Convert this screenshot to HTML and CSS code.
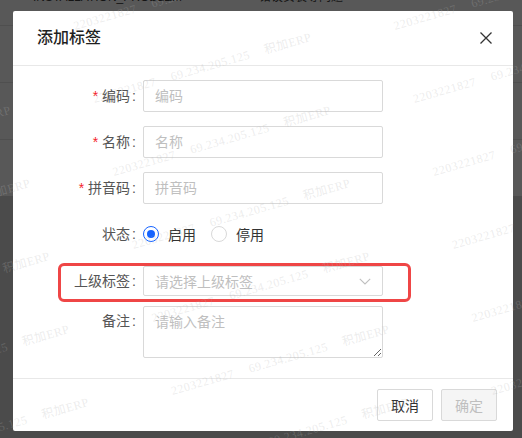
FILE: index.html
```html
<!DOCTYPE html>
<html lang="zh-CN">
<head>
    <meta charset="UTF-8">
    <meta name="viewport" content="width=device-width, initial-scale=1.0">
    <title>添加标签</title>
    <link rel="stylesheet" href="styles.css">
</head>
<body>

    <!-- table behind the mask -->
    <div class="bg-table">
        <div class="bg-row bg-row-first">
            <span class="bg-cell bg-code">INSTALLATION_PROBLEM</span>
            <span class="bg-cell bg-name">错误安装等问题</span>
        </div>
        <div class="bg-row"></div>
        <div class="bg-row"></div>
        <div class="bg-row bg-row-last"></div>
    </div>

    <div class="modal">
        <div class="modal-header">
            <div class="modal-title">添加标签</div>
            <button class="modal-close" type="button">
                <svg width="14" height="14" viewBox="0 0 14 14">
                    <path d="M1.5 1.5L12.5 12.5M12.5 1.5L1.5 12.5" stroke="#333" stroke-width="1.3" fill="none"/>
                </svg>
            </button>
        </div>

        <form class="modal-body" id="tagForm">
            <div class="form-item">
                <label class="form-label" for="code"><span class="required">*</span>编码</label>
                <input class="form-input" type="text" id="code" name="code" placeholder="编码">
            </div>
            <div class="form-item">
                <label class="form-label" for="name"><span class="required">*</span>名称</label>
                <input class="form-input" type="text" id="name" name="name" placeholder="名称">
            </div>
            <div class="form-item">
                <label class="form-label" for="pinyin"><span class="required">*</span>拼音码</label>
                <input class="form-input" type="text" id="pinyin" name="pinyin" placeholder="拼音码">
            </div>
            <div class="form-item">
                <label class="form-label">状态</label>
                <div class="radio-group">
                    <label class="radio">
                        <span class="radio-dot radio-dot-checked"></span>
                        <span class="radio-text">启用</span>
                    </label>
                    <label class="radio">
                        <span class="radio-dot"></span>
                        <span class="radio-text">停用</span>
                    </label>
                </div>
            </div>
            <div class="form-item form-item-select">
                <label class="form-label">上级标签</label>
                <div class="select">
                    <span class="select-placeholder">请选择上级标签</span>
                    <svg class="select-arrow" width="12" height="7" viewBox="0 0 12 7">
                        <path d="M0.8 0.8L6 6L11.2 0.8" stroke="#bfbfbf" stroke-width="1.1" fill="none"/>
                    </svg>
                </div>
                <div class="highlight"></div>
            </div>
            <div class="form-item form-item-top">
                <label class="form-label" for="remark">备注</label>
                <textarea class="form-textarea" id="remark" name="remark" placeholder="请输入备注"></textarea>
            </div>
        </form>

        <div class="modal-footer">
            <button class="btn" type="button">取消</button>
            <button class="btn btn-disabled" type="button" disabled>确定</button>
        </div>
    </div>

    <svg class="watermark" id="watermark" width="522" height="438"></svg>

    <script>
        // tiled watermark, same lattice as the app draws
        var wm = document.getElementById('watermark');
        var ns = 'http://www.w3.org/2000/svg';
        for (var r = -2; r < 8; r++) {
            for (var c = -2; c < 3; c++) {
                var x = 75 + 320 * c + 19.5 * r;
                var y = 30 + 73 * r;
                var t = document.createElementNS(ns, 'text');
                t.setAttribute('class', 'watermark-text');
                t.setAttribute('x', x);
                t.setAttribute('y', y);
                t.setAttribute('transform', 'rotate(-16 ' + x + ' ' + y + ')');
                t.textContent = '2203221827 69.234.205.125 积加ERP';
                wm.appendChild(t);
            }
        }
    </script>
</body>
</html>
```

FILE: styles.css
```css
html, body {
    margin: 0;
    padding: 0;
}

body {
    width: 522px;
    height: 438px;
    overflow: hidden;
    position: relative;
    background-color: #4b4b4b;
    font-family: "Liberation Sans", "Noto Sans CJK SC", sans-serif;
    font-size: 14px;
    color: #333;
}

/* page behind the mask */
.bg-table {
    width: 100%;
}

.bg-row {
    height: 56px;
    background-color: #585858;
    border-bottom: 1px solid #4f4f4f;
    display: flex;
}

.bg-row-first {
    height: 25px;
}

.bg-row-last {
    border-bottom: none;
}

.bg-cell {
    font-size: 12px;
    line-height: 14px;
    margin-top: -10px;
    color: #151515;
}

.bg-code {
    margin-left: 33px;
    width: 226px;
}

/* modal */
.modal {
    position: absolute;
    left: 13px;
    top: 11px;
    width: 500px;
    height: 420px;
    background-color: #fff;
    border-radius: 2px;
    display: flex;
    flex-direction: column;
}

.modal-header {
    height: 54px;
    border-bottom: 1px solid #e8e8e8;
    padding: 0 20px 0 24px;
    display: flex;
    align-items: center;
    justify-content: space-between;
}

.modal-title {
    font-size: 16px;
    font-weight: 500;
    color: #1f1f1f;
    line-height: 22px;
}

.modal-close {
    border: none;
    background: none;
    padding: 0;
    width: 14px;
    height: 14px;
    cursor: pointer;
    display: flex;
}

.modal-body {
    margin: 0;
    padding: 14px 0 20px;
    border-bottom: 1px solid #e8e8e8;
}

.form-item {
    display: flex;
    align-items: center;
    margin-bottom: 14px;
}

.form-item:nth-child(4) {
    margin-bottom: 16px;
}

.form-item-select {
    position: relative;
    margin-bottom: 10px;
}

.form-item-top {
    align-items: flex-start;
    margin-bottom: 0;
}

.form-label {
    width: 130px;
    box-sizing: border-box;
    padding-right: 7px;
    text-align: right;
    color: #555;
    line-height: 22px;
}

.form-label::after {
    content: ":";
    margin-left: 2px;
}

.form-item-top .form-label {
    padding-top: 4px;
}

.required {
    color: #f5222d;
    margin-right: 4px;
    font-family: "Liberation Sans", sans-serif;
}

.form-input,
.select,
.form-textarea {
    width: 240px;
    box-sizing: border-box;
    border: 1px solid #d9d9d9;
    border-radius: 2px;
    font-family: "Liberation Sans", "Noto Sans CJK SC", sans-serif;
    font-size: 14px;
    color: #333;
    outline: none;
}

.form-input {
    height: 32px;
    padding: 0 11px;
}

.form-input::placeholder,
.form-textarea::placeholder {
    color: #bfbfbf;
}

.select {
    height: 30px;
    padding: 0 11px;
    display: flex;
    align-items: center;
    justify-content: space-between;
}

.select-placeholder {
    color: #bfbfbf;
}

.form-textarea {
    height: 52px;
    padding: 4px 11px;
    line-height: 22px;
    resize: both;
}

/* radios */
.radio-group {
    display: flex;
    align-items: center;
    height: 32px;
}

.radio {
    display: flex;
    align-items: center;
    margin-right: 15px;
    cursor: pointer;
}

.radio-dot {
    width: 16px;
    height: 16px;
    box-sizing: border-box;
    border: 1px solid #d9d9d9;
    border-radius: 50%;
    display: flex;
    align-items: center;
    justify-content: center;
}

.radio-dot-checked {
    border-color: #1664ff;
}

.radio-dot-checked::after {
    content: "";
    width: 8px;
    height: 8px;
    border-radius: 50%;
    background-color: #1664ff;
}

.radio-text {
    margin-left: 9px;
    color: #333;
}

/* red annotation box */
.highlight {
    position: absolute;
    left: 45px;
    top: -3px;
    width: 353px;
    height: 39px;
    box-sizing: border-box;
    border: 3px solid #ef4646;
    border-radius: 6px;
}

.modal-footer {
    padding: 10px 16px;
    display: flex;
    justify-content: flex-end;
}

.btn {
    height: 32px;
    width: 56px;
    margin-left: 8px;
    border: 1px solid #d9d9d9;
    border-radius: 2px;
    background-color: #fff;
    font-family: "Liberation Sans", "Noto Sans CJK SC", sans-serif;
    font-size: 14px;
    color: #333;
    cursor: pointer;
}

.btn-disabled {
    background-color: #f5f5f5;
    color: #bfbfbf;
    cursor: not-allowed;
}

/* watermark over everything */
.watermark {
    position: absolute;
    left: 0;
    top: 0;
    pointer-events: none;
}

.watermark-text {
    font-family: "Liberation Serif", "Noto Sans CJK SC", serif;
    font-size: 12px;
    word-spacing: 12px;
    letter-spacing: 0.5px;
    fill: #b4b4b4;
    fill-opacity: 0.25;
}
```
